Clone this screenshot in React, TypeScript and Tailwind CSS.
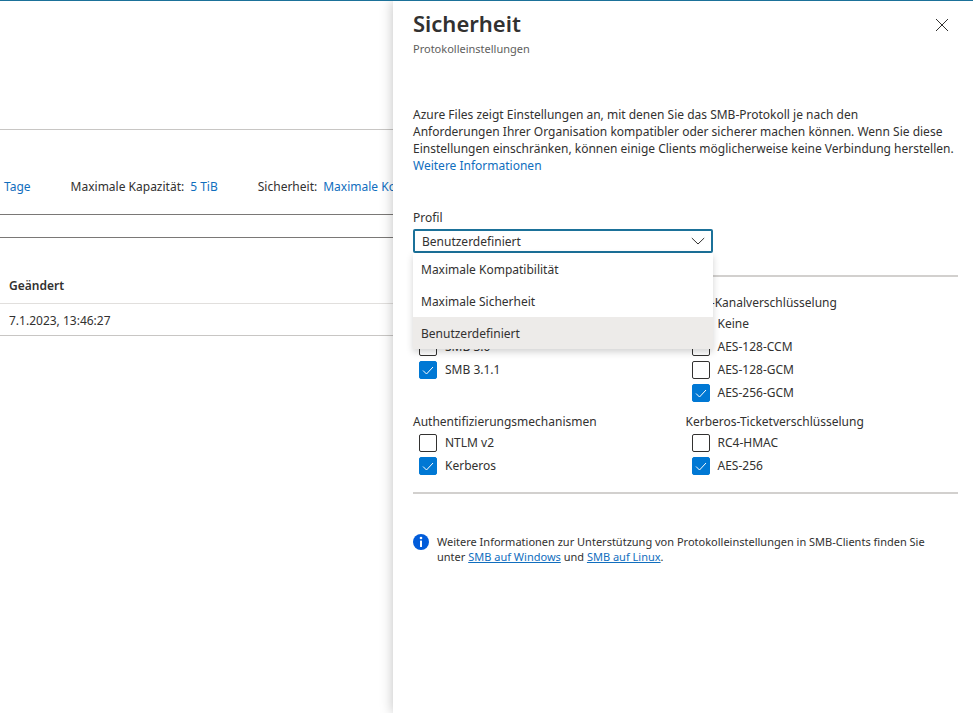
import { useId, useState } from 'react';

interface CheckOption {
  label: string;
  checked: boolean;
}

interface CheckGroupProps {
  title: string;
  options: CheckOption[];
}

const profiles = ['Maximale Kompatibilität', 'Maximale Sicherheit', 'Benutzerdefiniert'];

const groups: CheckGroupProps[] = [
  {
    title: 'SMB-Protokollversionen',
    options: [
      { label: 'SMB 2.1', checked: false },
      { label: 'SMB 3.0', checked: false },
      { label: 'SMB 3.1.1', checked: true },
    ],
  },
  {
    title: 'SMB-Kanalverschlüsselung',
    options: [
      { label: 'Keine', checked: false },
      { label: 'AES-128-CCM', checked: false },
      { label: 'AES-128-GCM', checked: false },
      { label: 'AES-256-GCM', checked: true },
    ],
  },
  {
    title: 'Authentifizierungsmechanismen',
    options: [
      { label: 'NTLM v2', checked: false },
      { label: 'Kerberos', checked: true },
    ],
  },
  {
    title: 'Kerberos-Ticketverschlüsselung',
    options: [
      { label: 'RC4-HMAC', checked: false },
      { label: 'AES-256', checked: true },
    ],
  },
];

function CheckRow({ label, checked }: CheckOption) {
  const [isChecked, setIsChecked] = useState(checked);

  return (
    <label className="flex h-[18px] items-center gap-2">
      <span className="grid size-[18px] shrink-0">
        <input
          type="checkbox"
          checked={isChecked}
          onChange={(event) => setIsChecked(event.target.checked)}
          className="peer col-start-1 row-start-1 size-[18px] appearance-none rounded-xs border border-[#323130] bg-white checked:border-[#0078d4] checked:bg-[#0078d4]"
        />
        <svg
          viewBox="0 0 18 18"
          className="pointer-events-none invisible col-start-1 row-start-1 size-[18px] peer-checked:visible"
          fill="none"
          stroke="#fff"
          strokeWidth="1"
        >
          <path d="M4 9.5l3.5 3.5 6.5-7" />
        </svg>
      </span>
      {label}
    </label>
  );
}

function CheckGroup({ title, options }: CheckGroupProps) {
  return (
    <fieldset>
      <legend className="mb-[3px] leading-[18px]">{title}</legend>
      <div className="flex flex-col gap-[5px] pl-1.5">
        {options.map((option) => (
          <CheckRow key={option.label} {...option} />
        ))}
      </div>
    </fieldset>
  );
}

function ProfileField() {
  const id = useId();
  const [profile, setProfile] = useState('Benutzerdefiniert');
  const [isOpen, setIsOpen] = useState(true);

  return (
    <div className="relative w-full max-w-[300px]">
      <label htmlFor={id} className="mb-0.5 block leading-[18px]">Profil</label>
      <div className="grid items-center">
        <select
          id={id}
          value={profile}
          onChange={(event) => setProfile(event.target.value)}
          className="col-start-1 row-start-1 h-6 w-full appearance-none rounded-xs border-2 border-[#1b7199] bg-white px-[7px] pt-0.5 leading-[18px] outline-none"
        >
          {profiles.map((name) => (
            <option key={name}>{name}</option>
          ))}
        </select>
        <svg
          viewBox="0 0 14 8"
          className="pointer-events-none col-start-1 row-start-1 mr-2 h-2 w-3.5 justify-self-end"
          fill="none"
          stroke="#323130"
        >
          <path d="M.8 1l6.2 6 6.2-6" />
        </svg>
      </div>
      {isOpen && (
        <ul
          role="listbox"
          aria-label="Profil"
          className="absolute inset-x-0 top-full z-10 bg-white shadow-[0_3px_7px_rgba(0,0,0,0.18)]"
        >
          {profiles.map((name) => (
            <li
              key={name}
              role="option"
              aria-selected={name === profile}
              onClick={() => {
                setProfile(name);
                setIsOpen(false);
              }}
              className="h-8 cursor-pointer px-2 pt-0.5 leading-[30px] aria-selected:bg-[#edebe9]"
            >
              {name}
            </li>
          ))}
        </ul>
      )}
    </div>
  );
}

function ShareList() {
  return (
    <main className="min-w-0 flex-1 overflow-hidden whitespace-nowrap">
      <div className="h-[129px] border-b border-[#c8c6c4]" />
      <div className="flex h-[85px] items-center gap-10 border-b border-[#7a7876] pt-[30px] pl-1">
        <a href="#tage" className="text-[#106ebe]">Tage</a>
        <p className="flex gap-1.5">
          Maximale Kapazität: <a href="#kapazitaet" className="text-[#106ebe]">5 TiB</a>
        </p>
        <p className="flex gap-1.5">
          Sicherheit: <a href="#sicherheit" className="text-[#106ebe]">Maximale Kompatibilität</a>
        </p>
      </div>
      <div className="h-[23px] border-b border-[#7a7876]" />
      <table className="w-full text-left">
        <thead>
          <tr className="h-[65px] border-b border-[#e1dfdd]">
            <th className="pt-8 pl-[9px] font-semibold">Geändert</th>
          </tr>
        </thead>
        <tbody>
          <tr className="h-8 border-b border-[#c8c6c4]">
            <td className="pt-1 pl-[9px]">7.1.2023, 13:46:27</td>
          </tr>
        </tbody>
      </table>
    </main>
  );
}

function SecurityPanel() {
  return (
    <aside className="w-3/5 max-w-[580px] bg-white pr-[15px] pl-5 shadow-[0_0_12px_rgba(0,0,0,0.25)]">
      <header className="flex items-start justify-between">
        <div>
          <h1 className="pt-1.5 pb-0.5 text-[22px] leading-8 font-semibold">Sicherheit</h1>
          <p className="text-[11px] leading-4 text-[#605e5c]">Protokolleinstellungen</p>
        </div>
        <button type="button" aria-label="Schließen" className="mt-[17px] flex size-8 items-start justify-center">
          <svg viewBox="0 0 14 14" className="size-3.5" fill="none" stroke="#323130">
            <path d="M1 1l12 12M13 1L1 13" />
          </svg>
        </button>
      </header>

      <p className="mt-[49px] leading-[17px]">
        Azure Files zeigt Einstellungen an, mit denen Sie das SMB-Protokoll je nach den
        <br />
        Anforderungen Ihrer Organisation kompatibler oder sicherer machen können. Wenn Sie diese
        <br />
        Einstellungen einschränken, können einige Clients möglicherweise keine Verbindung herstellen.
        <br />
        <a href="#informationen" className="text-[#106ebe]">Weitere Informationen</a>
      </p>

      <div className="mt-[35px]">
        <ProfileField />
      </div>

      <div className="mt-[22px] grid grid-cols-2 gap-y-[11px] border-y-2 border-[#d2d0ce] py-[17px]">
        {groups.map((group) => (
          <CheckGroup key={group.title} {...group} />
        ))}
      </div>

      <div className="mt-10 flex gap-2 text-[11px] leading-[15px]">
        <svg viewBox="0 0 16 16" className="size-4 shrink-0" aria-hidden="true">
          <circle cx="8" cy="8" r="8" fill="#015cda" />
          <circle cx="8" cy="4" r="1.3" fill="#fff" />
          <rect x="7" y="6.4" width="2" height="6.6" rx=".6" fill="#fff" />
        </svg>
        <p>
          Weitere Informationen zur Unterstützung von Protokolleinstellungen in SMB-Clients finden Sie
          <br />
          unter <a href="#windows" className="text-[#106ebe] underline">SMB auf Windows</a> und{' '}
          <a href="#linux" className="text-[#106ebe] underline">SMB auf Linux</a>.
        </p>
      </div>
    </aside>
  );
}

export default function App() {
  return (
    <div className="flex min-h-screen overflow-hidden border-t border-[#1b7199] bg-white font-['Noto_Sans',sans-serif] text-[12px] text-[#323130]">
      <ShareList />
      <SecurityPanel />
    </div>
  );
}
